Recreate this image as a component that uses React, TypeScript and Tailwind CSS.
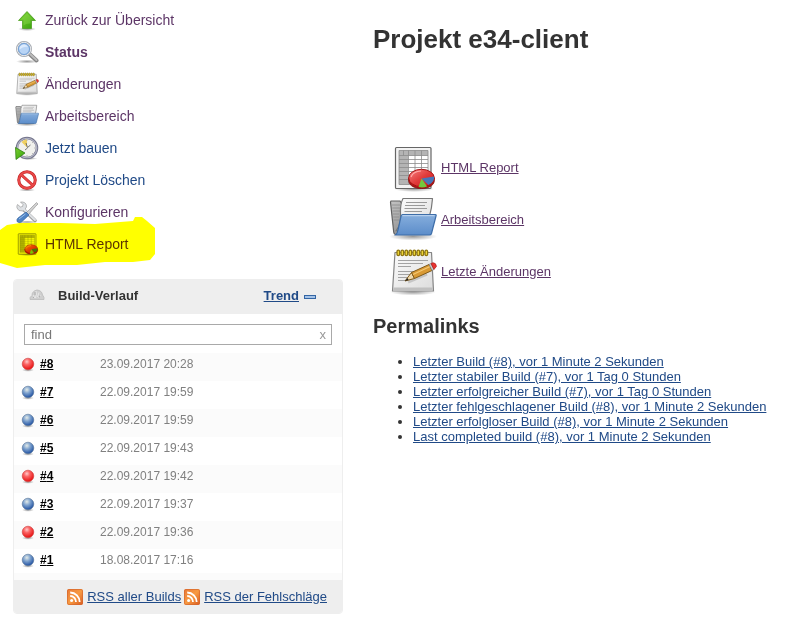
import { useState } from "react";
import type { ReactNode } from "react";

type IconProps = { className?: string };

function Gradients() {
  return (
    <svg className="absolute size-0" aria-hidden="true">
      <defs>
        <radialGradient id="ball-red" cx="0.4" cy="0.3" r="0.65">
          <stop offset="0" stopColor="#ffc9c9" />
          <stop offset="0.4" stopColor="#fb6464" />
          <stop offset="1" stopColor="#e81818" />
        </radialGradient>
        <radialGradient id="ball-blue" cx="0.4" cy="0.3" r="0.7">
          <stop offset="0" stopColor="#e4ebe8" />
          <stop offset="0.45" stopColor="#7ba0cd" />
          <stop offset="1" stopColor="#2050a0" />
        </radialGradient>
        <linearGradient id="green" x1="0" y1="0" x2="1" y2="1">
          <stop offset="0" stopColor="#7cd332" />
          <stop offset="1" stopColor="#35a00c" />
        </linearGradient>
        <linearGradient id="folder" x1="0" y1="0" x2="0" y2="1">
          <stop offset="0" stopColor="#86aedd" />
          <stop offset="1" stopColor="#5c8dca" />
        </linearGradient>
        <linearGradient id="paper" x1="0" y1="0" x2="1" y2="1">
          <stop offset="0" stopColor="#fcfcfc" />
          <stop offset="1" stopColor="#dcdcdc" />
        </linearGradient>
        <linearGradient id="grey" x1="0" y1="0" x2="1" y2="1">
          <stop offset="0" stopColor="#c4c4c4" />
          <stop offset="1" stopColor="#777777" />
        </linearGradient>
        <linearGradient id="red" x1="0" y1="0" x2="1" y2="1">
          <stop offset="0" stopColor="#f88080" />
          <stop offset="0.5" stopColor="#e03c3c" />
          <stop offset="1" stopColor="#cc1414" />
        </linearGradient>
        <linearGradient id="rss" x1="0" y1="0" x2="1" y2="1">
          <stop offset="0" stopColor="#e87836" />
          <stop offset="0.5" stopColor="#f79a42" />
          <stop offset="1" stopColor="#d85a20" />
        </linearGradient>
        <radialGradient id="shadow">
          <stop offset="0" stopColor="#000" stopOpacity="0.4" />
          <stop offset="1" stopColor="#000" stopOpacity="0" />
        </radialGradient>
      </defs>
    </svg>
  );
}

function Drawing({ className = "size-6", children }: IconProps & { children: ReactNode }) {
  return (
    <svg viewBox="0 0 48 48" className={`${className} shrink-0`} aria-hidden="true">
      {children}
    </svg>
  );
}

function UpIcon() {
  return (
    <Drawing>
      <ellipse cx="24" cy="42" rx="18" ry="4" fill="url(#shadow)" />
      <path d="M24 7 41 25H33V41H15V25H7Z" fill="url(#green)" stroke="#4a9c1c" strokeWidth="1.500" strokeLinejoin="round" />
      <path d="M24 10 37 23.500H31V31Q23 30 17 35V23.500H11Z" fill="#a5e765" opacity="0.3" />
    </Drawing>
  );
}

function SearchIcon() {
  return (
    <Drawing>
      <ellipse cx="24" cy="43" rx="22" ry="4" fill="url(#shadow)" />
      <path d="m29 28 14 13" stroke="#858585" strokeWidth="8" strokeLinecap="round" />
      <path d="m30 28 13 12" stroke="#bdbdbd" strokeWidth="4" strokeLinecap="round" />
      <circle cx="18" cy="18" r="14" fill="#b4d0f2" stroke="#a2a7ae" strokeWidth="4" />
      <circle cx="18" cy="18" r="13.500" fill="none" stroke="#e8eaed" strokeWidth="2" />
      <circle cx="18" cy="18" r="11" fill="#b8d4f5" stroke="#5c8fcc" strokeWidth="1.600" />
      <path d="M9 19a9 9 0 0 1 17-5Q17 12 9 19Z" fill="#dceafc" />
    </Drawing>
  );
}

function NotepadIcon({ className }: IconProps) {
  return (
    <Drawing className={className}>
      <ellipse cx="24" cy="44" rx="23" ry="3.500" fill="url(#shadow)" />
      <path d="M6 4.500H42.500L44.500 43H3.500Z" fill="url(#paper)" stroke="#858585" strokeWidth="1.200" strokeLinejoin="round" />
      <path d="M4.500 39.500H43.500V43H4Z" fill="#c0c0c0" />
      <path d="M9 12.500H39M9 15.500H34M9 18.500H22M9 23.500H33M9 26.500H29M9 29.500H25M9 32.500H18" stroke="#a3a3a3" strokeWidth="1" />
      <g fill="#f4dc38" stroke="#8d7410" strokeWidth="1.300">
        {[9, 13, 17, 21, 25, 29, 33, 37].map((x) => (
          <rect key={x} x={x - 1} y="2.200" width="2.600" height="5.400" rx="1.300" />
        ))}
      </g>
      <path d="M19 34 38 26" stroke="#000" strokeOpacity="0.15" strokeWidth="3" />
      <path d="m16 33 6.500-8.500 3 6Z" fill="#eed9ae" stroke="#805a1a" strokeWidth="1" strokeLinejoin="round" />
      <path d="m16 33 2.400-3 1.200 2Z" fill="#222" />
      <path d="m22.500 24.500 17.500-8 3 6-17.500 8Z" fill="#d99a34" stroke="#805a1a" strokeWidth="1" />
      <path d="m24 26.500 17-8" stroke="#f5c974" strokeWidth="1.200" />
      <path d="m40 16.500 2-1 3 6-2 1Z" fill="#c8c8c8" stroke="#777" strokeWidth="0.600" />
      <path d="m42 15.500 2-.8q3 0 3.500 3.700l-2.500 3Z" fill="#e83430" stroke="#a81414" strokeWidth="0.600" />
    </Drawing>
  );
}

function FolderIcon({ className }: IconProps) {
  return (
    <Drawing className={className}>
      <ellipse cx="24" cy="40.500" rx="24" ry="4" fill="url(#shadow)" />
      <path d="M2 5H11L13 8H38V38.500H7Q5 38.500 4.700 36L1.500 6Z" fill="url(#grey)" stroke="#606060" strokeWidth="1.200" />
      <path d="M3 9H11M3.300 12H11M3.600 15H11M4 18H10M4.300 21H10M4.600 24H10" stroke="#8a8a8a" strokeWidth="0.800" />
      <path d="M14 2.500H43.500Q43 12 40 22L7 35Q12 29 11.500 18Q11 8 14 2.500Z" fill="url(#paper)" stroke="#777" strokeWidth="1.200" strokeLinejoin="round" />
      <path d="M17 6.500H38M16 9.500H36M15.500 12.500H38M15.500 15.500H33" stroke="#999" strokeWidth="1" />
      <path d="M13.500 18.500H46.500Q47.500 18.500 47 20L42.500 37.500Q42 39 40.500 39H6.500Q8.500 37 9 34L12 20.500Q12.300 18.500 13.500 18.500Z" fill="url(#folder)" stroke="#3d6da8" strokeWidth="1.200" />
      <path d="M13.500 19.700H45.500" stroke="#bfd7f1" strokeWidth="1" />
    </Drawing>
  );
}

function ReportIcon({ className }: IconProps) {
  return (
    <Drawing className={className}>
      <ellipse cx="25" cy="45" rx="20" ry="3" fill="url(#shadow)" />
      <rect x="6.500" y="3.500" width="35.500" height="41" rx="1" fill="#f3f3f3" stroke="#666" strokeWidth="1.200" />
      <rect x="10" y="6.500" width="29" height="34" fill="#fff" />
      <path d="M10 6.500H39V11.500H19V40.500H10Z" fill="#b4b4b4" />
      <path d="M10 11.500H39M10 15.500H39M10 19.500H39M10 23.500H39M10 27.500H39M10 31.500H39M10 35.500H39M14.500 6.500V11.500M19.500 6.500V40.500M26 6.500V40.500M32.500 6.500V40.500M10 6.500H39V40.500H10Z" fill="none" stroke="#8c8c8c" strokeWidth="0.800" />
      <path d="M19.700 34v3c1 10 24.600 10 25.600 0V34Z" fill="#b01515" stroke="#7c0c0c" strokeWidth="0.800" />
      <ellipse cx="32.500" cy="34" rx="12.800" ry="8.700" fill="url(#red)" stroke="#a41212" strokeWidth="1" />
      <path d="M32.500 34.500 45 32.500Q46 38 39.500 41Z" fill="#4676ba" />
      <path d="m32.500 34.500 5.500 8q-4 1.500-8.500.5Z" fill="#73c83c" />
      <path d="M22 33Q24 27.500 32 27" fill="none" stroke="#ffa8a8" strokeWidth="1.200" />
    </Drawing>
  );
}

function ClockIcon() {
  return (
    <Drawing>
      <ellipse cx="28" cy="45" rx="17" ry="3" fill="url(#shadow)" />
      <circle cx="24" cy="24" r="20" fill="#f1f1ed" stroke="#74758c" strokeWidth="5" />
      <circle cx="24" cy="24" r="19.500" fill="none" stroke="#b4b5c6" strokeWidth="2.400" />
      <path d="M24 23 13 12Q18 6 24 7Z" fill="#f0d060" />
      <path d="m22 14 3 9 6-5M25 24l-5 4" fill="none" stroke="#666" strokeWidth="1.800" />
      <path d="M24 7v3M41 24h-3M24 41v-3M36 12l-2 2M36 36l-2-2" stroke="#aaa" strokeWidth="1.500" />
      <path d="M1 23 20 34 2 47Z" fill="url(#green)" stroke="#2c7c10" strokeWidth="1.500" strokeLinejoin="round" />
    </Drawing>
  );
}

function DeleteIcon() {
  return (
    <Drawing>
      <ellipse cx="24" cy="44" rx="17" ry="3" fill="url(#shadow)" />
      <circle cx="24" cy="24" r="16.500" fill="#fff" stroke="#c02020" strokeWidth="6" />
      <path d="m13 14 22 20" stroke="#c02020" strokeWidth="6" />
      <circle cx="24" cy="24" r="16.500" fill="none" stroke="#e84848" strokeWidth="4" />
      <path d="m12 13 24 22" stroke="#e84848" strokeWidth="4" />
    </Drawing>
  );
}

function ToolsIcon() {
  return (
    <Drawing>
      <ellipse cx="24" cy="44" rx="22" ry="3" fill="url(#shadow)" />
      <path d="m15 17 25 24" stroke="#9c9c9c" strokeWidth="7" strokeLinecap="round" />
      <path d="M5 9l6 5 4-1 1-4-5-5q11-1 12 8 0 2-1 4l-6 6q-10 1-12-6Q3 12 5 9Z" fill="#dde0e3" stroke="#999" strokeWidth="1.300" />
      <path d="m15 16 25 24" stroke="#dfe2e6" strokeWidth="4" strokeLinecap="round" />
      <path d="m23 25 15-15 5-5 3 3-5 5-14 16Z" fill="#d0d0d0" stroke="#8c8c8c" strokeWidth="1.200" />
      <path d="m22 24 6 6-15 14q-5 3-9-1-1-5 2-7Z" fill="#4f83c4" stroke="#2f609f" strokeWidth="1.300" />
      <path d="M8 38 21 28" stroke="#9ac0ea" strokeWidth="2" />
    </Drawing>
  );
}

function GaugeIcon() {
  return (
    <svg viewBox="0 0 16 12" className="h-3 w-4 shrink-0" aria-hidden="true">
      <path d="M1 10.500Q.5 8 3 6.500 3 2 8 1q5 .5 5.500 5 2 2 1.500 4.500Z" fill="#cfcfcf" stroke="#bababa" strokeWidth="0.800" />
      <path d="M7 2Q8 5 6.500 9M4 6l2 3M10 3.500 8.500 8M12 6 9 9" fill="none" stroke="#ececec" strokeWidth="0.900" />
      <path d="M6 3v3M11 6.500l-1 2M4 8.500h1" stroke="#a4a4a4" strokeWidth="0.800" />
    </svg>
  );
}

function Ball({ red }: { red: boolean }) {
  return (
    <svg viewBox="0 0 16 16" className="size-4 shrink-0" role="img" aria-label={red ? "Fehlgeschlagen" : "Erfolgreich"}>
      <ellipse cx="8" cy="14" rx="6" ry="1.800" fill="url(#shadow)" />
      <circle cx="8" cy="8" r="5.800" fill={red ? "url(#ball-red)" : "url(#ball-blue)"} stroke={red ? "#c44" : "#5b7799"} strokeWidth="0.600" />
    </svg>
  );
}

function RssIcon() {
  return (
    <svg viewBox="0 0 16 16" className="size-4 shrink-0" aria-hidden="true">
      <rect width="16" height="16" rx="2" fill="url(#rss)" />
      <rect x="0.500" y="0.500" width="15" height="15" rx="1.500" fill="none" stroke="#d3642c" strokeOpacity="0.600" />
      <circle cx="4.600" cy="11.600" r="1.500" fill="#fff" />
      <path d="M3.200 7a5.800 5.800 0 0 1 5.800 6M3.200 3.500a9.500 9.500 0 0 1 9.500 9.500" fill="none" stroke="#fff" strokeWidth="1.800" />
    </svg>
  );
}

function Highlight() {
  return (
    <svg viewBox="0 0 156 52" className="pointer-events-none absolute -top-3 left-0 h-[52px] w-[156px] mix-blend-multiply" aria-hidden="true">
      <path d="M0 14 7 9 20 7H60L95 8 133 5 135 1H142L147 5 155 12V38L150 44 133 46 105 46 77 49 45 49 17 52 0 47Z" fill="#ffff00" />
    </svg>
  );
}

const visited = "text-[#5c3566]";
const unvisited = "text-[#204a87]";

const tasks = [
  { label: "Zurück zur Übersicht", icon: <UpIcon />, color: visited },
  { label: "Status", icon: <SearchIcon />, color: visited, active: true },
  { label: "Änderungen", icon: <NotepadIcon />, color: visited },
  { label: "Arbeitsbereich", icon: <FolderIcon />, color: visited },
  { label: "Jetzt bauen", icon: <ClockIcon />, color: unvisited },
  { label: "Projekt Löschen", icon: <DeleteIcon />, color: unvisited },
  { label: "Konfigurieren", icon: <ToolsIcon />, color: visited },
  { label: "HTML Report", icon: <ReportIcon />, color: visited, marked: true },
];

const builds = [
  { id: 8, date: "23.09.2017 20:28", failed: true },
  { id: 7, date: "22.09.2017 19:59", failed: false },
  { id: 6, date: "22.09.2017 19:59", failed: false },
  { id: 5, date: "22.09.2017 19:43", failed: false },
  { id: 4, date: "22.09.2017 19:42", failed: true },
  { id: 3, date: "22.09.2017 19:37", failed: false },
  { id: 2, date: "22.09.2017 19:36", failed: true },
  { id: 1, date: "18.08.2017 17:16", failed: false },
];

const shortcuts = [
  { label: "HTML Report", icon: <ReportIcon className="size-12" /> },
  { label: "Arbeitsbereich", icon: <FolderIcon className="size-12" /> },
  { label: "Letzte Änderungen", icon: <NotepadIcon className="size-12" /> },
];

const permalinks = [
  "Letzter Build (#8), vor 1 Minute 2 Sekunden",
  "Letzter stabiler Build (#7), vor 1 Tag 0 Stunden",
  "Letzter erfolgreicher Build (#7), vor 1 Tag 0 Stunden",
  "Letzter fehlgeschlagener Build (#8), vor 1 Minute 2 Sekunden",
  "Letzter erfolgloser Build (#8), vor 1 Minute 2 Sekunden",
  "Last completed build (#8), vor 1 Minute 2 Sekunden",
];

function BuildHistory() {
  const [query, setQuery] = useState("");
  const shown = builds.filter((b) => `#${b.id} ${b.date}`.includes(query));
  return (
    <section className="ml-[13px] overflow-hidden rounded border border-[#eeeeee]">
      <header className="flex h-[34px] items-center bg-[#eeeeee] pr-[26px] pb-1 pl-[15px] font-bold">
        <GaugeIcon />
        <h2 className="ml-[13px]">Build-Verlauf</h2>
        <a href="#trend" className="ml-auto text-[#204a87] underline">Trend</a>
        <button type="button" aria-label="Einklappen" className="mt-[3px] ml-[5px] h-1 w-3 border border-[#3465a4] bg-[#a4c3e8]" />
      </header>
      <div className="mx-[10px] mt-[10px] mb-2 flex h-[21px] items-center border border-[#a9a9a9] bg-white">
        <input
          type="text"
          aria-label="find"
          placeholder="find"
          value={query}
          onChange={(e) => setQuery(e.target.value)}
          className="min-w-0 flex-1 px-[6px] text-[13px] leading-4 outline-none placeholder:text-[#777777]"
        />
        <button type="button" aria-label="x" onClick={() => setQuery("")} className="px-[5px] text-[13px] leading-4 text-[#999999]">x</button>
      </div>
      <table className="w-full text-xs">
        <tbody>
          {shown.map((b) => (
            <tr key={b.id} className="h-7 odd:bg-[#fbfbfb] last:h-6">
              <td className="w-[86px] pt-[3px] pl-[6px] align-top">
                <div className="flex items-start gap-1 leading-4">
                  <Ball red={b.failed} />
                  <a href={`#${b.id}`} className="font-bold text-black underline">#{b.id}</a>
                </div>
              </td>
              <td className="pt-[3px] align-top leading-4 text-[#808080]">{b.date}</td>
            </tr>
          ))}
        </tbody>
      </table>
      <div className="h-[7px] bg-[#fbfbfb]" />
      <footer className="flex h-[33px] items-center justify-end gap-[3px] bg-[#eeeeee] pr-[15px] text-[#204a87]">
        <a href="#rss-all" className="flex items-center gap-1 underline"><RssIcon />RSS aller Builds</a>
        <a href="#rss-failed" className="flex items-center gap-1 underline"><RssIcon />RSS der Fehlschläge</a>
      </footer>
    </section>
  );
}

export default function App() {
  return (
    <div className="flex bg-white font-['Liberation_Sans',Arial,sans-serif] text-[13px] leading-[15px] text-[#333333]">
      <Gradients />
      <aside className="w-[343px] shrink-0 pt-1">
        <nav className="mb-[19px]">
          <ul>
            {tasks.map((t) => (
              <li key={t.label} className="relative flex h-8 items-center pl-[15px] text-sm">
                <a href="#task" className={`flex items-center gap-[6px] ${t.color} ${t.active ? "font-bold" : ""}`}>
                  {t.icon}
                  {t.label}
                </a>
                {t.marked && <Highlight />}
              </li>
            ))}
          </ul>
        </nav>
        <BuildHistory />
      </aside>
      <main className="min-w-0 flex-1 pt-6 pl-[30px]">
        <h1 className="text-[26px] leading-[30px] font-bold">Projekt e34-client</h1>
        <ul className="mt-[88px] ml-4">
          {shortcuts.map((s) => (
            <li key={s.label} className="flex h-[52px] items-center">
              <a href="#shortcut" className="flex items-center gap-1 text-[#5c3566] underline">
                {s.icon}
                <span className="pb-[2px]">{s.label}</span>
              </a>
            </li>
          ))}
        </ul>
        <h2 className="mt-4 text-xl leading-6 font-bold">Permalinks</h2>
        <ul className="mt-4 list-disc pl-10">
          {permalinks.map((p) => (
            <li key={p}>
              <a href="#permalink" className="text-[#204a87] underline">{p}</a>
            </li>
          ))}
        </ul>
      </main>
    </div>
  );
}
